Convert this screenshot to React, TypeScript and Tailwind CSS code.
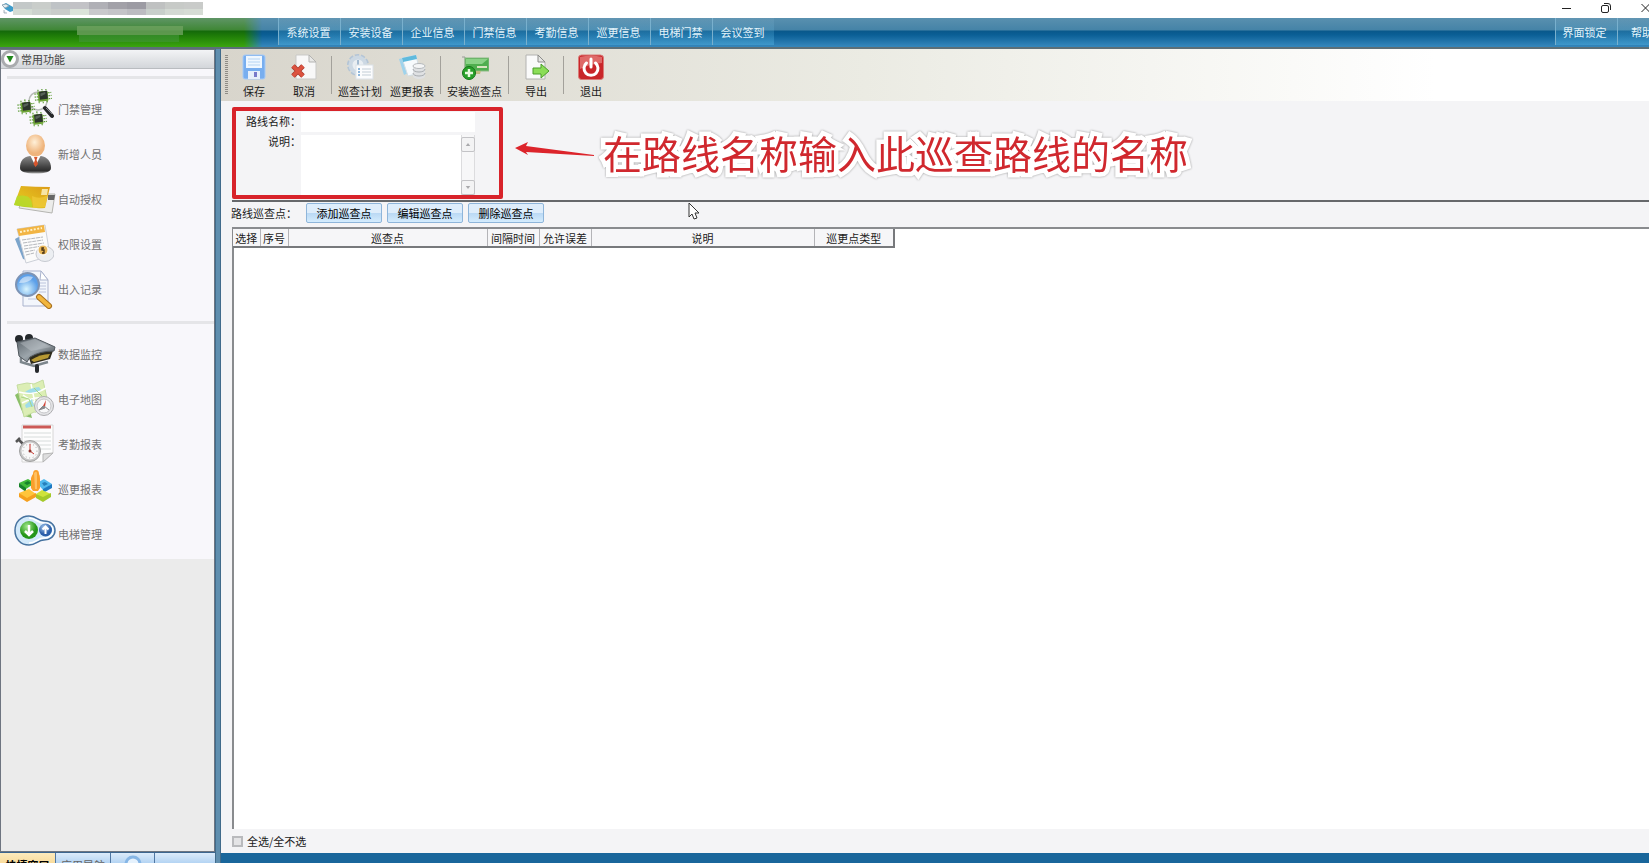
import { useState, type ReactNode } from "react"

type IconItem = {
  id: string
  label: string
  icon: ReactNode
}

const Chip = ({ x, y }: { x: number; y: number }) => (
  <g transform={`translate(${x} ${y}) rotate(-6)`}>
    <path d="M-2 3h17M-2 6h17M-2 9h17M2 -1v14M6 -2v15M10 -1v14" stroke="#5c9a35" strokeWidth="1.2" strokeDasharray="1.6 0.7" />
    <rect x="1.500" y="1" width="10" height="10" rx="1" fill="#6fa536" />
    <rect x="3" y="1" width="8" height="8" fill="#2b332c" />
    <path d="M4 3l5-1v2l-5 2z" fill="#566158" />
  </g>
)

const accessIcon = (
  <svg viewBox="0 0 40 40" className="size-10" aria-hidden="true">
    <circle cx="24" cy="12" r="9" fill="#fbfbfb" stroke="#b9bcb9" strokeWidth="1.500" />
    <Chip x={22} y={2} />
    <Chip x={5} y={13} />
    <Chip x={17} y={25} />
    <path d="M31 19l7 8" stroke="#26282a" strokeWidth="4" strokeLinecap="round" />
    <path d="M32 19l6 6" stroke="#80858a" strokeWidth="1" />
  </svg>
)

const personIcon = (
  <svg viewBox="0 0 40 40" className="size-10" aria-hidden="true">
    <defs>
      <radialGradient id="face" cx="45%" cy="35%">
        <stop offset="0" stopColor="#fff0d8" />
        <stop offset="1" stopColor="#efb47c" />
      </radialGradient>
      <linearGradient id="suit" x2="0" y2="1">
        <stop offset="0" stopColor="#8a8a8a" />
        <stop offset="0.6" stopColor="#454545" />
        <stop offset="0.85" stopColor="#2c2c2c" />
        <stop offset="1" stopColor="#b5b5b5" />
      </linearGradient>
    </defs>
    <path d="M6 34c0-7 3-11 10-12h11c6 1 10 5 10 12 0 4-6 5.500-15.500 5.500S6 38 6 34z" fill="url(#suit)" />
    <path d="M16 21l5.500 11 5.500-11z" fill="#fff" />
    <path d="M20 23h3.500l-1 3 1.500 4-2.500 3-2-3 1.500-4z" fill="#d8552c" />
    <ellipse cx="21.500" cy="11.500" rx="9.500" ry="11" fill="url(#face)" />
  </svg>
)

const cardIcon = (
  <svg viewBox="0 0 42 40" className="h-10 w-[42px]" aria-hidden="true">
    <defs>
      <linearGradient id="card" x1="0" y1="1" x2="1" y2="0">
        <stop offset="0" stopColor="#9ccf22" />
        <stop offset="0.4" stopColor="#e3bd1e" />
        <stop offset="1" stopColor="#dc9a18" />
      </linearGradient>
    </defs>
    <path d="M10 15h31l-3 19-33-5z" fill="#ececea" stroke="#b5b5b1" />
    <path d="M34 16h7l-1 5h-6z" fill="#666" />
    <path d="M7 7q14 1 29 1l-5 21q-15 1-31-3z" fill="url(#card)" />
    <path d="M3 17q16-3 15 11-10 0-18-2z" fill="#b7dc2c" opacity="0.8" />
    <path d="M18 17q8 4 16-1l-3 12-12 1z" fill="#f3cf3e" opacity="0.6" />
    <path d="M28 10h6l-1 6h-6z" fill="#f7e5a4" />
  </svg>
)

const permissionIcon = (
  <svg viewBox="0 0 40 40" className="size-10" aria-hidden="true">
    <path d="M1 15l8 20 7 2-6-27z" fill="#7ba4cb" />
    <path d="M3 5l28-4 5 31-24 7z" fill="#fbfbfb" stroke="#ccd0d8" />
    <path d="M3 5l27-4 1 7-26 4z" fill="#f2b544" />
    <path d="M6 8l22-4" stroke="#fff1c8" strokeWidth="2" strokeDasharray="2 1.500" />
    <path d="M8 16l21-3M9 19l20-3M10 22l20-3M10 25l18-3M11 28l10-2M12 31l8-2" stroke="#b5b8bd" strokeDasharray="4 0.7" />
    <ellipse cx="31" cy="30" rx="9" ry="7.500" fill="#eceef2" stroke="#c6c9d0" />
    <circle cx="29" cy="26" r="5" fill="#e6b557" stroke="#fff" />
    <path d="M30 24h-2v2h2v3h-2" stroke="#463015" fill="none" strokeWidth="1.300" />
  </svg>
)

const recordIcon = (
  <svg viewBox="0 0 40 40" className="size-10" aria-hidden="true">
    <defs>
      <radialGradient id="lens" cx="45%" cy="70%">
        <stop offset="0" stopColor="#d9f5ff" />
        <stop offset="1" stopColor="#5c9fe8" />
      </radialGradient>
    </defs>
    <path d="M9 2h18l7 9v26H9z" fill="#f3f6fc" stroke="#aab3cd" />
    <path d="M27 2l-1 9h8z" fill="#fff" stroke="#aab3cd" />
    <path d="M25 14h7M25 17h7M25 20h7M25 23h7M14 30h10" stroke="#bcc4dc" />
    <circle cx="13.500" cy="15.500" r="11.500" fill="url(#lens)" stroke="#7d93b4" strokeWidth="2" />
    <path d="M5 14q3-9 14-6-3 6-14 6z" fill="#fff" opacity="0.5" />
    <path d="M25 28l10 9" stroke="#a8701e" strokeWidth="6" strokeLinecap="round" />
    <path d="M25 28l10 9" stroke="#f2b63e" strokeWidth="4" strokeLinecap="round" />
  </svg>
)

const cameraIcon = (
  <svg viewBox="0 0 42 40" className="h-10 w-[42px]" aria-hidden="true">
    <defs>
      <linearGradient id="cam" x2="1" y2="1">
        <stop offset="0" stopColor="#596168" />
        <stop offset="0.5" stopColor="#9ca5ab" />
        <stop offset="1" stopColor="#3b4147" />
      </linearGradient>
    </defs>
    <circle cx="5" cy="5" r="4" fill="#24282b" />
    <circle cx="15" cy="4" r="4" fill="#24282b" />
    <path d="M7 14v14l13 4 14-4" fill="none" stroke="#7d868c" strokeWidth="2.500" />
    <rect x="21" y="30" width="4" height="9" rx="2" fill="#25282b" />
    <path d="M14 21l26-7-4 11-19 5z" fill="#2f2c1d" />
    <path d="M17 26q9-6 19-6l-2 4-14 4z" fill="#b89a33" />
    <path d="M3 8l18-4 20 9-1 4q-14 0-24 6l-3 5-8-6z" fill="url(#cam)" stroke="#51585e" />
    <path d="M6 9l15-4 16 8-20 4z" fill="#c5cbd0" opacity="0.4" />
  </svg>
)

const mapIcon = (
  <svg viewBox="0 0 40 40" className="size-10" aria-hidden="true">
    <path d="M1 16l9 21 8 2L10 10z" fill="#8cbf69" />
    <path d="M3 6l10-2 7 1 9-4 6 28-9 5-6-1-10 5z" fill="#dceeb5" stroke="#c5dda0" />
    <path d="M5 13q14 4 27-4M8 24q15-8 26-4M17 5l6 29M9 16l18 12" stroke="#fff" strokeWidth="1.500" fill="none" />
    <path d="M11 13q5-4 14-5l2 3q-8 4-16 2zM11 26l7-6 2 7-8 2z" fill="#9edcea" />
    <path d="M7 18l8 2 3 8M20 9l8 8" fill="none" stroke="#a8d683" />
    <circle cx="30" cy="27" r="9.500" fill="#e6e6e8" stroke="#adadb0" />
    <circle cx="30" cy="27" r="7" fill="#f9f9fa" stroke="#c5c5c8" />
    <path d="M32 21l-1 7-2-1z" fill="#d23f31" />
    <path d="M25 31l4-4 2 2zM35 31l-5-4" fill="#88888b" stroke="#88888b" />
  </svg>
)

const attendanceIcon = (
  <svg viewBox="0 0 40 40" className="size-10" aria-hidden="true">
    <path d="M8 1h31v28l-10 9H8z" fill="#fdfdfd" stroke="#d6d6d6" />
    <path d="M9 3h28" stroke="#cc5a57" strokeWidth="3" />
    <path d="M10 9h27M10 13h27M10 17h27M10 21h27M10 25h27" stroke="#d7dcdb" />
    <path d="M29 38v-8l10-1z" fill="#dedede" stroke="#b5b5b5" />
    <path d="M4 15l5 5M2 18l4-4" stroke="#555" strokeWidth="2.500" />
    <circle cx="16" cy="27" r="10.500" fill="#c5c5c5" stroke="#a0a0a0" />
    <circle cx="16" cy="27" r="8.500" fill="#f8f8f8" />
    <circle cx="16" cy="27" r="7" fill="none" stroke="#aaa" strokeDasharray="1 2.600" />
    <path d="M16 20v7l4 3" stroke="#c8332b" fill="none" />
    <circle cx="16" cy="27" r="1.500" fill="#8b3029" />
  </svg>
)

const patrolIcon = (
  <svg viewBox="0 0 40 40" className="size-10" aria-hidden="true">
    <path d="M5 14l9-4 7 4-9 6z" fill="#42ba39" />
    <path d="M5 14v4l7 5v-4z" fill="#17822a" />
    <path d="M23 14l7-4 8 5-9 6z" fill="#51b9ed" />
    <path d="M38 15v4l-9 5v-4z" fill="#1c79c2" />
    <path d="M5 24l10-4 7 5-9 6z" fill="#ffc53b" />
    <path d="M5 24v4l8 5 9-5v-4l-9 5z" fill="#f5a01e" />
    <path d="M22 25l6-4 9 4-8 5z" fill="#cfe33b" />
    <path d="M22 25v4l7 4 8-5v-4l-8 4z" fill="#a4c92a" />
    <path d="M10 14l4-2 3 2-4 2z" fill="#17822a" />
    <path d="M28 14l3-1 3 2-4 2z" fill="#267fbb" />
    <path d="M17 9q1-3 2-4 0-4 3-4 3 0 3 4 1 1 1 5v9l-2 3h-5l-2-3z" fill="#fa9f2c" />
    <path d="M20 4q3-3 3 1v15h-2z" fill="#ffc061" />
  </svg>
)

const elevatorIcon = (
  <svg viewBox="0 0 42 40" className="h-10 w-[42px]" aria-hidden="true">
    <defs>
      <radialGradient id="down" cx="40%" cy="30%">
        <stop offset="0" stopColor="#a4eb8f" />
        <stop offset="1" stopColor="#259619" />
      </radialGradient>
      <radialGradient id="up" cx="40%" cy="30%">
        <stop offset="0" stopColor="#a9cdf1" />
        <stop offset="1" stopColor="#2b5fa9" />
      </radialGradient>
    </defs>
    <path d="M15 2c8 0 9 5 15 5 7 0 11 4 11 9.500S36 26 30 26c-6 0-8 5-15 5C7 31 1 25 1 16.500S7 2 15 2z" fill="#d2e9fa" stroke="#46729f" strokeWidth="1.500" />
    <path d="M15 4c7 0 8 5 15 5 5 0 9 3 9 7.500S35 24 30 24c-6 0-8 5-15 5" fill="none" stroke="#fff" strokeWidth="1.500" />
    <circle cx="15" cy="16" r="9" fill="url(#down)" />
    <circle cx="31.500" cy="16" r="6.500" fill="url(#up)" />
    <path d="M15 11v9M11 17l4 4 4-4" stroke="#fff" strokeWidth="2.500" fill="none" />
    <path d="M31.500 20v-7M28.500 15.500l3-3 3 3" stroke="#fff" strokeWidth="2" fill="none" />
  </svg>
)

const saveIcon = (
  <svg viewBox="0 0 26 26" className="size-[26px]" aria-hidden="true">
    <rect x="2" y="1" width="22" height="24" rx="2" fill="#78aeef" stroke="#a6caf6" />
    <rect x="5" y="2" width="16" height="12" fill="#eff7ff" />
    <path d="M7 5h12M7 8h12M7 11h12" stroke="#b5d4f3" />
    <rect x="7" y="17" width="12" height="8" fill="#e7effa" />
    <rect x="13" y="18" width="3" height="5" fill="#7879c9" />
  </svg>
)

const cancelIcon = (
  <svg viewBox="0 0 26 26" className="size-[26px]" aria-hidden="true">
    <path d="M5 1h13l7 7v17H5z" fill="#f8f8f8" stroke="#c9c9c7" />
    <path d="M18 1v7h7z" fill="#e8e8e6" stroke="#b3b3b1" />
    <path d="M2 12l10 10M12 12L2 22" stroke="#a93a2e" strokeWidth="5" />
    <path d="M2 12l10 10M12 12L2 22" stroke="#dc523f" strokeWidth="3.500" />
  </svg>
)

const planIcon = (
  <svg viewBox="0 0 28 26" className="h-[26px] w-7" aria-hidden="true">
    <circle cx="12" cy="11" r="9" fill="none" stroke="#b4c5d6" strokeWidth="4" strokeDasharray="4 1.600" />
    <circle cx="12" cy="11" r="7.500" fill="#e9eef2" stroke="#ccd8e3" strokeWidth="4" />
    <path d="M12 6v5" stroke="#8ba9c5" strokeWidth="1.500" />
    <rect x="10" y="11" width="17" height="14" fill="#fbfcfd" stroke="#dbe1e7" />
    <path d="M12 15h2M12 18h2M12 21h2" stroke="#6a9ed0" strokeWidth="1.500" />
    <path d="M16 15h9M16 18h9M16 21h9" stroke="#c2cdd6" />
  </svg>
)

const reportIcon = (
  <svg viewBox="0 0 28 26" className="h-[26px] w-7" aria-hidden="true">
    <path d="M1 5l5 16 6-3L8 3z" fill="#9fd3ec" />
    <path d="M4 4l14-3 4 18-12 3z" fill="#f7fafc" stroke="#d3dee5" />
    <path d="M4 4l14-3 1 4-14 3z" fill="#5fbadd" />
    <path d="M15 12v10c0 4 12 4 12 0V12z" fill="#dfe1e3" />
    <path d="M15 15c0 4 12 4 12 0M15 19c0 4 12 4 12 0" fill="none" stroke="#a8acb0" />
    <ellipse cx="21" cy="12" rx="6" ry="2.500" fill="#f4f5f6" stroke="#b5b9bc" />
  </svg>
)

const installIcon = (
  <svg viewBox="0 0 28 26" className="h-[26px] w-7" aria-hidden="true">
    <path d="M1 3h3v14" stroke="#999b98" fill="none" />
    <rect x="4" y="4" width="24" height="13" fill="#4fae4e" stroke="#8cbb85" />
    <path d="M5 5h22l-6 5H5z" fill="#8ad286" />
    <path d="M16 13h10" stroke="#d9e4bf" strokeWidth="2" />
    <path d="M12 17h8l-1 3h-6z" fill="#c2bd83" />
    <circle cx="8" cy="19" r="6.500" fill="#28a12a" stroke="#147519" />
    <path d="M8 15v8M4 19h8" stroke="#e8fadf" strokeWidth="2.500" />
  </svg>
)

const exportIcon = (
  <svg viewBox="0 0 26 26" className="size-[26px]" aria-hidden="true">
    <path d="M3 1h12l7 7v17H3z" fill="#fafafa" stroke="#b2b2b0" />
    <path d="M15 1v7h7z" fill="#e5e5e3" stroke="#8b8b89" />
    <path d="M10 14h8v-4l8 7-8 7v-4h-8z" fill="#8bdd57" stroke="#4a9d2b" />
  </svg>
)

const exitIcon = (
  <svg viewBox="0 0 26 26" className="size-[26px]" aria-hidden="true">
    <rect x="0.500" y="1" width="25" height="24.500" rx="3" fill="#c9262a" stroke="#da7c79" />
    <path d="M2 3q11-3 22 0v6q-12 1-22 6z" fill="#e88683" opacity="0.7" />
    <path d="M8.500 9a7 7 0 1 0 9 0" fill="none" stroke="#fff" strokeWidth="3" strokeLinecap="round" />
    <path d="M13 5v8" stroke="#fff" strokeWidth="3" strokeLinecap="round" />
  </svg>
)

const menus = ["系统设置", "安装设备", "企业信息", "门禁信息", "考勤信息", "巡更信息", "电梯门禁", "会议签到"]

const sideGroups: IconItem[][] = [
  [
    { id: "access", label: "门禁管理", icon: accessIcon },
    { id: "person", label: "新增人员", icon: personIcon },
    { id: "card", label: "自动授权", icon: cardIcon },
    { id: "permission", label: "权限设置", icon: permissionIcon },
    { id: "record", label: "出入记录", icon: recordIcon },
  ],
  [
    { id: "camera", label: "数据监控", icon: cameraIcon },
    { id: "map", label: "电子地图", icon: mapIcon },
    { id: "attendance", label: "考勤报表", icon: attendanceIcon },
    { id: "patrol", label: "巡更报表", icon: patrolIcon },
    { id: "elevator", label: "电梯管理", icon: elevatorIcon },
  ],
]

const toolGroups: IconItem[][] = [
  [
    { id: "save", label: "保存", icon: saveIcon },
    { id: "cancel", label: "取消", icon: cancelIcon },
  ],
  [
    { id: "plan", label: "巡查计划", icon: planIcon },
    { id: "report", label: "巡更报表", icon: reportIcon },
  ],
  [{ id: "install", label: "安装巡查点", icon: installIcon }],
  [{ id: "export", label: "导出", icon: exportIcon }],
  [{ id: "exit", label: "退出", icon: exitIcon }],
]

const columns = [
  { name: "选择", width: "w-[27px]" },
  { name: "序号", width: "w-7" },
  { name: "巡查点", width: "w-[199px]" },
  { name: "间隔时间", width: "w-[52px]" },
  { name: "允许误差", width: "w-[52px]" },
  { name: "说明", width: "w-[223px]" },
  { name: "巡更点类型", width: "w-20" },
]

function TitleBar() {
  return (
    <header className="flex h-[18px] shrink-0 items-start bg-white">
      <svg viewBox="0 0 12 12" className="mt-0.5 ml-px size-3" aria-hidden="true">
        <path d="M1 3l4-2 7 4v4l-3 1-5-3z" fill="#3d9ccb" />
        <path d="M1 3l4-1 3 2-4 2zM3 8v3h3" fill="#e6eef2" stroke="#8a9aa3" strokeWidth="0.700" />
      </svg>
      <div className="mt-0.5 grid h-[13px] w-[190px] grid-cols-10 grid-rows-2">
        <i className="bg-[#c3c8c8]" /><i className="bg-[#c9cdca]" /><i className="bg-[#bfc3c6]" /><i className="bg-[#c2c2c6]" /><i className="bg-[#b0b0b6]" />
        <i className="bg-[#a2a1a8]" /><i className="bg-[#9c9ba3]" /><i className="bg-[#bfc1c1]" /><i className="bg-[#c7cac7]" /><i className="bg-[#c9cbc9]" />
        <i className="bg-[#d4dcd4]" /><i className="bg-[#ccd2ce]" /><i className="bg-[#c9ccca]" /><i className="bg-[#dbe3da]" /><i className="bg-[#c9c9cc]" />
        <i className="bg-[#c4c4c8]" /><i className="bg-[#bcbcc1]" /><i className="bg-[#c8cfcb]" /><i className="bg-[#d3d9d3]" /><i className="bg-[#d6dcd5]" />
      </div>
      <div className="ml-auto flex h-[15px] text-[#222]">
        <button aria-label="最小化" className="flex w-9 items-center justify-center">
          <svg viewBox="0 0 10 10" className="size-2.5"><path d="M0 5.500h9" stroke="currentColor" /></svg>
        </button>
        <button aria-label="还原" className="flex w-[42px] items-center justify-center">
          <svg viewBox="0 0 10 10" className="size-2.5">
            <rect x="0.500" y="2.500" width="7" height="7" rx="1.500" fill="none" stroke="currentColor" />
            <path d="M3 0.500h4q2.500 0 2.500 2.500v4" fill="none" stroke="currentColor" />
          </svg>
        </button>
        <button aria-label="关闭" className="flex w-[22px] items-center justify-end overflow-hidden">
          <svg viewBox="0 0 8 10" className="h-2.5 w-2"><path d="M0.500 1l8 8M0.500 9l8-8" stroke="currentColor" /></svg>
        </button>
      </div>
    </header>
  )
}

function MenuBar() {
  const itemClass =
    "h-[27px] shrink-0 whitespace-nowrap border-l border-[#79b0cd] bg-linear-to-b from-white/5 to-[#5bc0ee]/35 text-[#e4f4fb]"

  return (
    <nav className="flex h-[31px] shrink-0 border-b-2 border-[#5c6f78] bg-[#3385ba]">
      <div className="flex w-full bg-[linear-gradient(to_bottom,#5990af_0,#4583a7_12px,#09588b_13px,#0b5f96_17px,#3385ba_28px)]">
        <div className="h-full w-[278px] shrink-0 bg-[linear-gradient(to_bottom,#5f9566_0,#3f8735_12px,#14690a_13px,#1f7d08_18px,#3ba50f_29px)] mask-[linear-gradient(to_right,black_244px,transparent_262px)] pt-2 pl-[71px]">
          <div className="ml-1.5 h-[9px] w-[106px] bg-[#6ea15f]/80" />
          <div className="ml-2 h-[7px] w-[100px] bg-[#43963a]/60" />
        </div>
        {menus.map((menu) => (
          <button key={menu} className={`w-[62px] pr-0.5 ${itemClass}`}>
            {menu}
          </button>
        ))}
        <button className={`ml-auto w-[62px] pr-1 ${itemClass}`}>界面锁定</button>
        <button className={`w-8 overflow-hidden pl-[13px] ${itemClass}`}>帮助</button>
      </div>
    </nav>
  )
}

function Sidebar() {
  return (
    <aside className="flex w-[215px] shrink-0 flex-col">
      <div className="flex min-h-0 flex-1 flex-col border border-[#6e7580] bg-[#ebebeb]">
        <h2 className="flex h-[19px] shrink-0 items-center border-b border-[#b9bcc0] bg-linear-to-b from-[#f3f4f6] to-[#d3d6da] text-[#444]">
          <button aria-label="折叠" className="mr-0.5 flex size-[18px] items-center justify-center rounded-full border-[3px] border-[#a9abae] bg-white">
            <svg viewBox="0 0 8 8" className="size-2"><path d="M0.500 1h7L4 7.500z" fill="#21881c" /></svg>
          </button>
          常用功能
        </h2>
        <div className="bg-[#f8f7fb]">
          {sideGroups.map((group, index) => (
            <section key={index}>
              <div className="ml-1.5 h-[17px] pt-[7px]">
                <div className="h-[3px] bg-[#e5e5e8]" />
              </div>
              <ul className="pb-[3px]">
                {group.map((item) => (
                  <li key={item.id}>
                    <button className="flex h-[45px] w-full items-center pl-[13px] text-[#707070]">
                      <span className="w-11">{item.icon}</span>
                      {item.label}
                    </button>
                  </li>
                ))}
              </ul>
            </section>
          ))}
        </div>
      </div>
      <div className="flex h-[11px] shrink-0 items-start overflow-hidden border-t border-[#3c6690] bg-linear-to-b from-[#dcebfa] to-[#b4d4f3]">
        <button className="h-6 w-[55px] bg-linear-to-b from-[#fdebbd] to-[#f3c76b] font-bold text-black">快捷窗口</button>
        <button className="h-6 w-14 border-x border-[#5077a3] text-[#666]">应用导航</button>
        <button aria-label="刷新" className="flex h-6 w-11 justify-center border-r border-[#5077a3] pt-0.5">
          <svg viewBox="0 0 18 18" className="size-[18px]">
            <circle cx="9" cy="9" r="7" fill="#e6f2fd" stroke="#86b6e6" strokeWidth="3" />
          </svg>
        </button>
      </div>
    </aside>
  )
}

function Toolbar() {
  return (
    <div className="flex h-[52px] shrink-0 items-center bg-linear-to-r from-[#d8d5cc] via-[#ebebe3] via-45% to-white to-85% text-[#1c1c1c]">
      <div className="mr-px ml-1 h-10 w-[3px] bg-[repeating-linear-gradient(to_bottom,#8e8c86_0,#8e8c86_1px,#d8d5cc_1px,#d8d5cc_2px)]" />
      {toolGroups.map((group, index) => (
        <div key={index} className="flex items-center">
          {index > 0 && <div className="mx-0.5 h-[38px] w-px bg-[#a3a19b]" />}
          {group.map((tool) => (
            <button
              key={tool.id}
              className="flex h-12 min-w-[50px] flex-col items-center justify-between px-1 pt-[3px] whitespace-nowrap"
            >
              {tool.icon}
              <span className="leading-4">{tool.label}</span>
            </button>
          ))}
        </div>
      ))}
    </div>
  )
}

function RouteForm() {
  const [name, setName] = useState("")
  const [remark, setRemark] = useState("")

  return (
    <div className="ml-[11px] flex h-[101px] shrink-0 items-start border-b-2 border-[#66686b] pt-1.5">
      <form className="flex h-[92px] w-[271px] shrink-0 flex-col gap-[3px] rounded-xs border-4 border-[#d8232a] pt-px">
        <div className="flex h-5">
          <label htmlFor="route-name" className="w-[65px] text-right leading-[18px]">
            路线名称：
          </label>
          <input
            id="route-name"
            className="w-[174px] bg-white px-1 outline-none"
            value={name}
            onChange={(e) => setName(e.target.value)}
          />
        </div>
        <div className="flex h-[60px]">
          <label htmlFor="route-remark" className="w-[65px] text-right leading-3">
            说明：
          </label>
          <textarea
            id="route-remark"
            className="w-40 resize-none overflow-hidden bg-white px-1 outline-none"
            value={remark}
            onChange={(e) => setRemark(e.target.value)}
          />
          <div className="flex w-3.5 flex-col justify-between border-x border-[#dcdcde] bg-[#f7f7f8] pt-0.5">
            <button type="button" aria-label="向上" className="-mx-px flex h-[15px] items-center justify-center rounded-xs border border-[#c3c3c6] bg-[#f3f3f4]">
              <svg viewBox="0 0 6 4" className="h-[3px] w-1.5"><path d="M0 4l3-4 3 4z" fill="#a9a9ac" /></svg>
            </button>
            <button type="button" aria-label="向下" className="-mx-px flex h-[15px] items-center justify-center rounded-xs border border-[#c3c3c6] bg-[#f3f3f4]">
              <svg viewBox="0 0 6 4" className="h-[3px] w-1.5"><path d="M0 0l3 4 3-4z" fill="#a9a9ac" /></svg>
            </button>
          </div>
        </div>
      </form>
      <svg viewBox="0 0 80 16" className="mt-[34px] ml-3 h-4 w-20 shrink-0" aria-hidden="true">
        <path d="M0 7L13 1l-2 4 68 9v1L11 11l2 3z" fill="#dc242b" />
      </svg>
      <p className="ml-2 pt-[19px] text-[39px] leading-[52px] whitespace-nowrap text-[#d0282e] drop-shadow-[0_0_1px_#999] [-webkit-text-stroke:9px_white] [paint-order:stroke_fill]">
        在路线名称输入此巡查路线的名称
      </p>
    </div>
  )
}

function PointTable() {
  const [allSelected, setAllSelected] = useState(false)

  return (
    <>
      <div className="ml-2.5 flex h-[25px] shrink-0 items-start gap-[5px] pt-px leading-5">
        <span className="w-[70px]">路线巡查点：</span>
        {["添加巡查点", "编辑巡查点", "删除巡查点"].map((label) => (
          <button
            key={label}
            className="flex h-5 w-[76px] items-center justify-center rounded-xs border border-[#8eb5da] bg-linear-to-b from-[#deedfb] from-50% via-[#b9d8f4] via-50% to-[#d4ecfd] text-black"
          >
            {label}
          </button>
        ))}
      </div>
      <div className="ml-[11px] min-h-0 flex-1 border-t-2 border-l-2 border-[#898b8e] bg-white">
        <table className="-ml-px table-fixed border-r-2 border-b-2 border-[#77797c] bg-[#f6f6f8]">
          <thead>
            <tr className="h-[18px]">
              {columns.map((column) => (
                <th
                  key={column.name}
                  className={`border-r border-[#b4b4b8] p-0 leading-4 font-normal whitespace-nowrap last:border-r-0 ${column.width}`}
                >
                  {column.name}
                </th>
              ))}
            </tr>
          </thead>
          <tbody></tbody>
        </table>
      </div>
      <label className="ml-[11px] flex h-6 shrink-0 items-center gap-1">
        <input
          type="checkbox"
          className="size-[11px] appearance-none border-2 border-[#b9babd] bg-[#e4e4e6] checked:bg-[#4a7da0]"
          checked={allSelected}
          onChange={(e) => setAllSelected(e.target.checked)}
        />
        全选/全不选
      </label>
    </>
  )
}

export default function App() {
  return (
    <div className="flex h-screen flex-col overflow-hidden bg-white font-['Noto_Sans_CJK_SC',sans-serif] text-[11px] leading-4 text-[#1a1a1a]">
      <TitleBar />
      <MenuBar />
      <div className="flex min-h-0 flex-1">
        <Sidebar />
        <div className="w-1.5 shrink-0 border-x border-[#416b8b] bg-[#5f8eae]" />
        <main className="relative flex min-w-0 flex-1 flex-col bg-[#f4f4f6]">
          <Toolbar />
          <RouteForm />
          <PointTable />
          <div className="h-2.5 shrink-0 bg-[#19669b]" />
          {/* Ponteiro do mouse sobre a tela */}
          <svg viewBox="0 0 12 18" className="absolute top-[153px] left-[467px] h-[18px] w-3" aria-hidden="true">
            <path d="M1 1v14l3-3 2 5 3-1-2-5h4z" fill="#fff" stroke="#333" />
          </svg>
        </main>
      </div>
    </div>
  )
}
